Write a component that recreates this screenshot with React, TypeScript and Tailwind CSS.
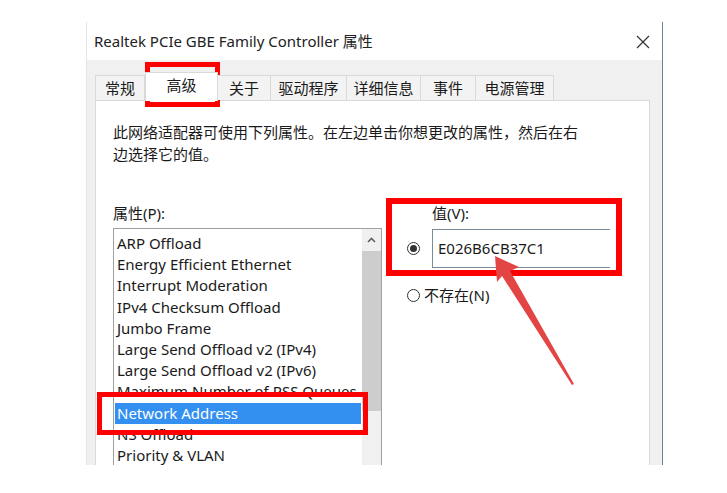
import React from 'react';

const cjk = '"Noto Sans", "Noto Sans CJK SC", sans-serif';

const tabs = [
  { label: '常规', w: 'w-[50px]' },
  { label: '高级', w: 'w-[73px]', active: true },
  { label: '关于', w: 'w-[54px]' },
  { label: '驱动程序', w: 'w-[77px]' },
  { label: '详细信息', w: 'w-[75px]' },
  { label: '事件', w: 'w-[56px]' },
  { label: '电源管理', w: 'w-[79px]' },
];

const properties = [
  'ARP Offload',
  'Energy Efficient Ethernet',
  'Interrupt Moderation',
  'IPv4 Checksum Offload',
  'Jumbo Frame',
  'Large Send Offload v2 (IPv4)',
  'Large Send Offload v2 (IPv6)',
  'Maximum Number of RSS Queues',
  'Network Address',
  'NS Offload',
  'Priority & VLAN',
];

function Radio({ checked }: { checked?: boolean }) {
  return (
    <span className="flex h-[13px] w-[13px] shrink-0 items-center justify-center rounded-full border border-[#333] bg-white">
      {checked && <span className="h-[7px] w-[7px] rounded-full bg-[#333]" />}
    </span>
  );
}

export default function App() {
  return (
    <div
      className="relative h-[493px] w-[727px] overflow-hidden bg-white text-[#1a1a1a]"
      style={{ fontFamily: cjk }}
    >
      <div className="ml-[86px] pt-[22px]">
        {/* 对话框 */}
        <div className="flex h-[443px] w-[577px] flex-col overflow-hidden border-l border-l-[#e6e6e6] border-r border-r-[#6b8399]">
          <div className="flex h-[38px] shrink-0 items-center justify-between bg-white pl-[7px] pr-[12px]">
            <span className="text-[15px] text-[#222]">
              Realtek PCIe GBE Family Controller 属性
            </span>
            <svg width="14" height="14" viewBox="0 0 14 14" className="mt-[2px]">
              <path d="M1 1 L13 13 M13 1 L1 13" stroke="#333" strokeWidth="1.2" />
            </svg>
          </div>

          <div className="flex flex-1 flex-col bg-[#f0f0f0] pl-[8px] pr-[12px] pt-[11px]">
            {/* 选项卡 */}
            <div className="relative z-10 flex h-[29px] items-end">
              {tabs.map((t) =>
                t.active ? (
                  <div
                    key={t.label}
                    className={`${t.w} -mb-px flex h-[29px] items-center justify-center border border-b-0 border-[#d9d9d9] bg-white pb-[4px] text-[15px]`}
                  >
                    {t.label}
                  </div>
                ) : (
                  <div
                    key={t.label}
                    className={`${t.w} -ml-px flex h-[25px] items-center justify-center border border-b-0 border-[#d9d9d9] bg-[#f3f3f3] text-[15px] first:ml-0`}
                  >
                    {t.label}
                  </div>
                )
              )}
            </div>

            {/* 高级 面板 */}
            <div className="flex-1 border border-b-0 border-[#d9d9d9] bg-white px-[17px] pt-[20px]">
              <p className="text-[15px] leading-[22px]">
                此网络适配器可使用下列属性。在左边单击你想更改的属性，然后在右
                <br />
                边选择它的值。
              </p>

              <div className="mt-[37px] flex">
                <div className="w-[269px] shrink-0">
                  <div className="h-[26px] text-[15px] leading-[22px]">属性(P):</div>
                  <div className="flex h-[260px] border border-[#a0a0a0] bg-white">
                    <div className="flex-1 pl-[1px] pt-[4px]">
                      {properties.map((p) => (
                        <div
                          key={p}
                          className={`h-[21.2px] whitespace-nowrap overflow-hidden pl-[2px] text-[15px] leading-[21px] ${
                            p === 'Network Address' ? 'bg-[#3390f0] text-white' : ''
                          }`}
                        >
                          {p}
                        </div>
                      ))}
                    </div>
                    <div className="ml-[1px] flex w-[19px] flex-col bg-[#f0f0f0]">
                      <div className="flex h-[22px] items-center justify-center">
                        <svg width="9" height="6" viewBox="0 0 9 6">
                          <path d="M1 5 L4.5 1.5 L8 5" stroke="#606060" strokeWidth="1.6" fill="none" />
                        </svg>
                      </div>
                      <div className="h-[160px] bg-[#cdcdcd]" />
                    </div>
                  </div>
                </div>

                <div className="ml-[25px] flex-1">
                  <div className="pl-[25px] text-[15px] leading-[22px]">值(V):</div>
                  <div className="mt-[5px] flex items-center">
                    <Radio checked />
                    <div className="ml-[12px] flex h-[39px] w-[178px] items-center border border-r-0 border-[#7a8a96] pl-[5px] text-[15px]">
                      E026B6CB37C1
                    </div>
                  </div>
                  <div className="mt-[16px] flex items-center gap-[4px]">
                    <Radio />
                    <span className="text-[15px] leading-[22px]">不存在(N)</span>
                  </div>
                </div>
              </div>
            </div>
          </div>
        </div>
      </div>

      {/* 标注 */}
      <div className="absolute left-[145px] top-[62px] h-[45px] w-[75px] border-[5px] border-[#ff0000]" />
      <div className="absolute left-[386px] top-[198px] h-[78px] w-[236px] border-[6px] border-[#ff0000]" />
      <div className="absolute left-[97px] top-[392px] h-[43px] w-[271px] border-[5px] border-[#ff0000]" />
      <svg className="absolute left-0 top-0" width="727" height="493" viewBox="0 0 727 493">
        <polygon
          points="495,256 519,267 510,271 574,384 572,385 502,276 497,282"
          fill="#e34545"
        />
      </svg>
    </div>
  );
}
